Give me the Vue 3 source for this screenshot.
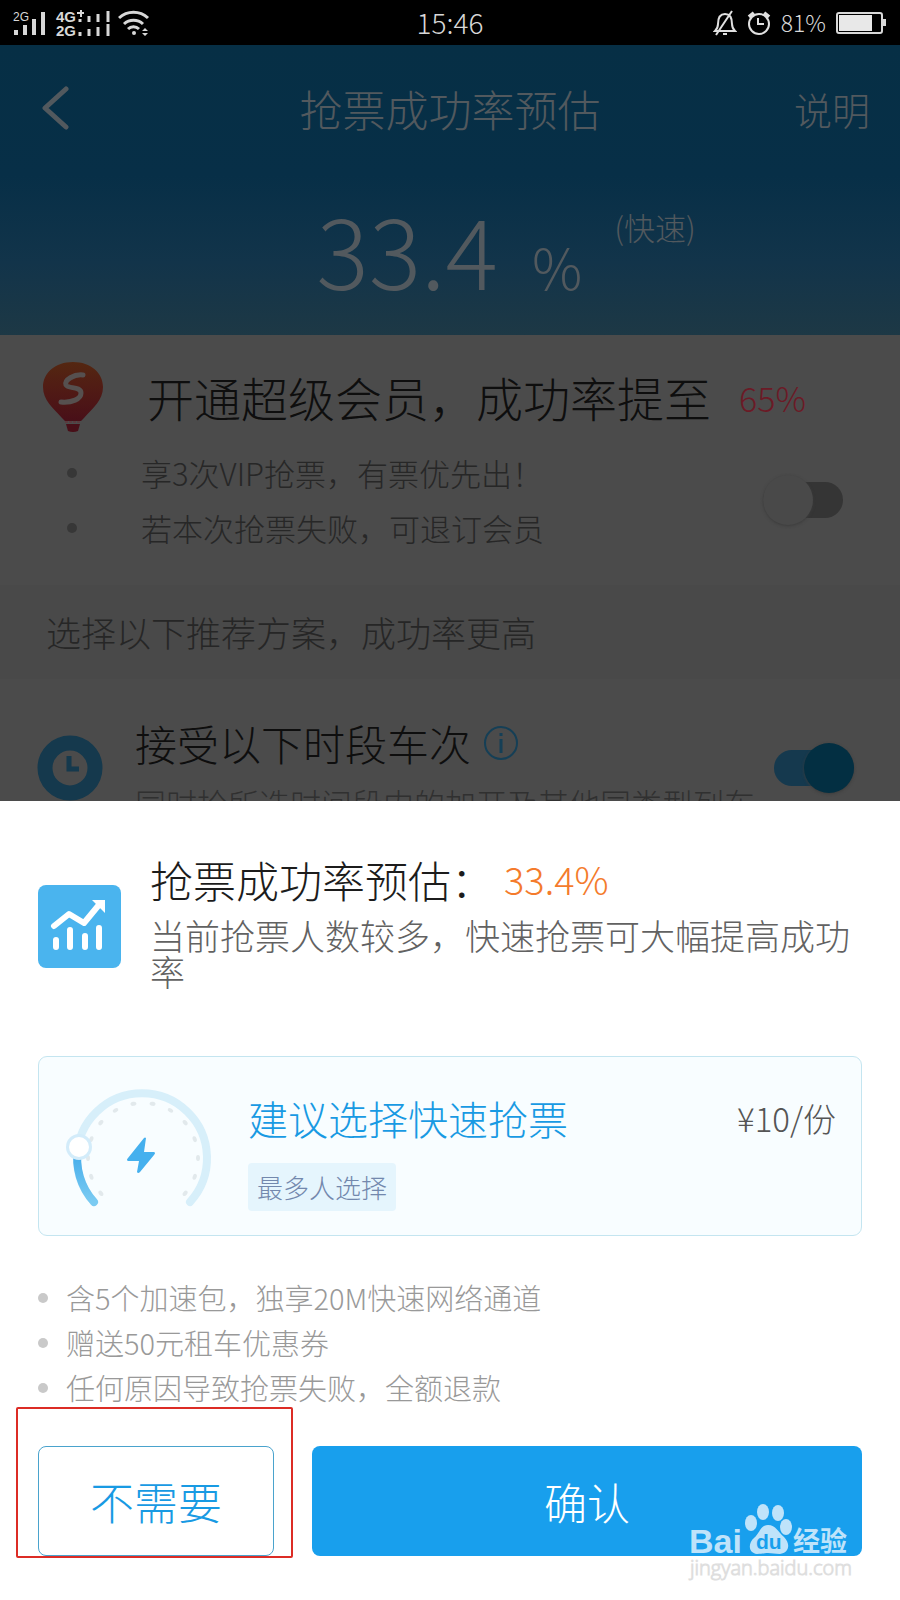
<script setup>
import { ref } from 'vue'

const vip = ref(false)
const period = ref(true)

const vipPerks = ['享3次VIP抢票，有票优先出！', '若本次抢票失败，可退订会员']
const perks = [
  '含5个加速包，独享20M快速网络通道',
  '赠送50元租车优惠券',
  '任何原因导致抢票失败，全额退款',
]

const ticks = Array.from({ length: 14 }, (_, i) => {
  const angle = 140 + (i * 260) / 13
  const a = (angle * Math.PI) / 180
  return { x: 77 + 55 * Math.cos(a), y: 76 + 55 * Math.sin(a), angle }
})
</script>

<template>
  <div class="screen">
    <div class="status">
      <div class="status-side">
        <svg width="118" height="44" viewBox="0 0 118 44" fill="#d8d8d8">
          <text x="13" y="20" font-size="12">2G</text>
          <path d="M16 29v5M25 24v10M34 18v16M43 11v23" stroke="#d8d8d8" stroke-width="4" />
          <text x="56" y="21" font-size="15" font-weight="700">4G</text>
          <path d="M77 12h7M81 9v7" stroke="#d8d8d8" stroke-width="2" />
          <text x="56" y="35" font-size="15" font-weight="700">2G</text>
          <path d="M80 18v3M89 15v6M98 13v8M108 10v11M80 31v4M89 28v7M98 26v9M108 23v12" stroke="#d8d8d8" stroke-width="3" />
        </svg>
        <svg width="32" height="26" viewBox="0 0 32 26" fill="none" stroke="#d8d8d8" stroke-width="3">
          <path d="M1 8a21 21 0 0 1 29 0M6 14a14 14 0 0 1 19 0M10 19a8 8 0 0 1 11 0" />
          <circle cx="16" cy="23" r="2" fill="#d8d8d8" stroke="none" />
          <path d="M27 18l3 3h-6zM27 26l3-3h-6z" fill="#d8d8d8" stroke="none" />
        </svg>
      </div>
      <time>15:46</time>
      <div class="status-side end">
        <svg width="24" height="26" viewBox="0 0 24 26" fill="none" stroke="#e0e0e0" stroke-width="2">
          <path d="M2 21c2-2 3-3 3-7 0-6 2-10 7-10s7 4 7 10c0 4 1 5 3 7zM19 1L3 25M10 24h4" />
        </svg>
        <svg width="24" height="24" viewBox="0 0 24 24" fill="none" stroke="#e0e0e0" stroke-width="2">
          <circle cx="12" cy="13" r="10" />
          <path d="M11 7v6h6" />
          <path d="M2 6l5-4M22 6l-5-4" stroke-width="4" />
        </svg>
        <span>81%</span>
        <svg width="51" height="22" viewBox="0 0 51 22">
          <rect x="1" y="1" width="45" height="20" rx="2" fill="none" stroke="#d8d8d8" stroke-width="2" />
          <rect x="3" y="3" width="33" height="16" fill="#e8e8e8" />
          <rect x="47" y="7" width="3" height="7" fill="#d8d8d8" />
        </svg>
      </div>
    </div>

    <header>
      <nav>
        <button class="back" type="button" aria-label="返回">
          <svg width="28" height="44" viewBox="0 0 28 44" fill="none" stroke="#52595e" stroke-width="5" stroke-linecap="round" stroke-linejoin="round">
            <path d="M24 3L3 22l21 19" />
          </svg>
        </button>
        <h1>抢票成功率预估</h1>
        <a class="help" href="#">说明</a>
      </nav>
      <div class="rate">
        <span class="rate-number">33.4</span>
        <span class="rate-unit">%</span>
        <span class="rate-mode">(快速)</span>
      </div>
    </header>

    <main>
      <section class="vip">
        <div class="vip-title">
          <svg width="62" height="72" viewBox="0 0 62 72">
            <defs>
              <linearGradient id="balloon" x1="0" y1="0" x2="0" y2="1">
                <stop offset="0" stop-color="#542711" />
                <stop offset="0.5" stop-color="#501a15" />
                <stop offset="1" stop-color="#480f18" />
              </linearGradient>
            </defs>
            <path d="M31 1C13 1 1 12 1 26c0 13 10 21 19 31l3 3h16l3-3c9-10 19-18 19-31C61 12 49 1 31 1z" fill="url(#balloon)" />
            <path d="M24 63h14l-2 7q-5 2-10 0z" fill="#480f18" />
            <path d="M23 61h16" stroke="#5a3a3e" stroke-width="2" stroke-dasharray="3 1" />
            <path d="M41 14c-9-1-19 5-17 10 2 4 15 1 15 8 0 6-9 10-20 9" fill="none" stroke="#56504f" stroke-width="5" stroke-linecap="round" />
          </svg>
          <h2>开通超级会员，成功率提至</h2>
          <strong>65%</strong>
        </div>
        <div class="vip-body">
          <ul>
            <li v-for="p in vipPerks" :key="p">{{ p }}</li>
          </ul>
          <input v-model="vip" class="switch" type="checkbox" role="switch" aria-label="开通超级会员">
        </div>
      </section>

      <p class="hint">选择以下推荐方案，成功率更高</p>

      <section class="period">
        <svg class="clock" width="66" height="66" viewBox="0 0 66 66">
          <circle cx="33" cy="33" r="25" fill="none" stroke="#15394d" stroke-width="15" />
          <path d="M32 21v13h10" fill="none" stroke="#15394d" stroke-width="5" />
        </svg>
        <div class="period-copy">
          <h2>
            接受以下时段车次
            <svg width="36" height="36" viewBox="0 0 36 36" fill="none" stroke="#153f56" stroke-width="2">
              <circle cx="18" cy="18" r="16" />
              <path d="M18 14v14M18 8v3" stroke-width="3" />
            </svg>
          </h2>
          <p>同时抢所选时间段内的加开及其他同类型列车</p>
        </div>
        <input v-model="period" class="switch" type="checkbox" role="switch" aria-label="接受以下时段车次">
      </section>
    </main>

    <div class="sheet" role="dialog" aria-labelledby="sheet-title">
      <div class="summary">
        <svg width="83" height="83" viewBox="0 0 83 83">
          <rect width="83" height="83" rx="8" fill="#4ab4ee" />
          <g fill="none" stroke="#fff" stroke-linecap="round" stroke-width="6">
            <path d="M16 41l15-12 15 9 14-17" stroke-linejoin="round" />
            <path d="M18 55v7M32 45v17M47 51v11M61 43v19" />
          </g>
          <path d="M54 15h13v13z" fill="#fff" />
        </svg>
        <div>
          <h2 id="sheet-title">抢票成功率预估：<strong>33.4%</strong></h2>
          <p>当前抢票人数较多，快速抢票可大幅提高成功率</p>
        </div>
      </div>

      <section class="plan">
        <svg class="gauge" width="154" height="130" viewBox="0 0 154 130">
          <defs>
            <linearGradient id="progress" x1="0" y1="0" x2="0" y2="1">
              <stop offset="0" stop-color="#3ea9ea" />
              <stop offset="1" stop-color="#7bcbf2" />
            </linearGradient>
          </defs>
          <path d="M28 120A65 65 0 1 1 124 120" fill="none" stroke="#d7effa" stroke-width="8" stroke-linecap="round" />
          <path d="M28 120A65 65 0 0 1 12 66" fill="none" stroke="url(#progress)" stroke-width="8" stroke-linecap="round" />
          <ellipse
            v-for="t in ticks" :key="t.angle" :cx="t.x" :cy="t.y" rx="2" ry="3" fill="#e2e9ec"
            :transform="`rotate(${t.angle} ${t.x} ${t.y})`"
          />
          <circle cx="13" cy="65" r="13" fill="#d3ecfa" />
          <circle cx="13" cy="65" r="10" fill="#fff" />
          <path d="M78 56q1-1 2 0l-2 14h10q2 1 0 3L74 90q-2 2-3 0l2-11H62q-2-1 0-3z" fill="#45b0ee" />
        </svg>
        <div class="plan-copy">
          <div class="plan-title">
            <h3>建议选择快速抢票</h3>
            <span class="price">¥10/份</span>
          </div>
          <span class="tag">最多人选择</span>
        </div>
      </section>

      <ul class="perks">
        <li v-for="p in perks" :key="p">{{ p }}</li>
      </ul>

      <div class="actions">
        <div class="decline-wrap">
          <button class="decline" type="button">不需要</button>
        </div>
        <button class="confirm" type="button">确认</button>
        <svg class="watermark" width="170" height="84" viewBox="0 0 170 84" aria-hidden="true">
          <g fill="#bfe3fa">
            <text x="5" y="53" font-size="34" font-weight="700">Bai</text>
            <ellipse cx="67" cy="23" rx="6" ry="8" />
            <ellipse cx="79" cy="12" rx="6" ry="8" />
            <ellipse cx="94" cy="13" rx="6" ry="8" />
            <ellipse cx="102" cy="27" rx="6" ry="8" />
            <path d="M84 25c-8 0-8 8-14 13-6 5-6 15 3 16 5 0 7-1 11-1s7 1 12 1c9-1 11-10 4-17-6-5-8-12-16-12z" />
            <text class="cjk" x="109" y="51" font-size="27" font-weight="700">经验</text>
          </g>
          <text x="72" y="49" font-size="21" font-weight="700" fill="#189fed">du</text>
          <text class="site" x="6" y="75" font-size="20" fill="#fff" stroke="#dedede" stroke-width="1">jingyan.baidu.com</text>
        </svg>
      </div>
    </div>
  </div>
</template>

<style>
body {
  margin: 0;
  background: #fff;
}
</style>

<style scoped>
.screen {
  font-family: "Noto Sans CJK SC", "Noto Sans", sans-serif;
  font-weight: 300;
  background: #fff;
  overflow: hidden;
}
h1, h2, h3, p, ul {
  margin: 0;
  padding: 0;
  font-weight: 300;
}
ul { list-style: none; }
svg { flex: none; display: block; }
button { font: inherit; cursor: pointer; padding: 0; }
strong { font-weight: 300; }

.status {
  display: grid;
  grid-template-columns: 1fr auto 1fr;
  align-items: center;
  height: 45px;
  background: #000;
  color: #d8d8d8;
}
.status text { font-family: "Liberation Sans", sans-serif; }
.status-side { display: flex; align-items: center; }
.status time { font-size: 28px; line-height: 45px; }
.end { justify-content: flex-end; gap: 10px; padding-right: 13px; font-size: 23px; line-height: 45px; }

header {
  height: 290px;
  background: linear-gradient(#062f45 0%, #072f47 45%, #12344a 75%, #1d3845 100%);
  color: #52595e;
}
nav {
  display: grid;
  grid-template-columns: 1fr auto 1fr;
  align-items: center;
  height: 126px;
  padding: 0 30px;
}
.back { justify-self: start; margin-left: 12px; background: none; border: 0; color: inherit; }
h1 { font-size: 43px; line-height: 60px; }
.help { justify-self: end; color: inherit; text-decoration: none; font-size: 38px; }
.rate {
  display: flex;
  justify-content: center;
  align-items: baseline;
  padding-left: 112px;
  line-height: 152px;
}
.rate-number { font-size: 98px; }
.rate-unit { font-size: 56px; margin-left: 34px; }
.rate-mode { font-size: 31px; line-height: 40px; align-self: flex-start; margin: 36px 0 0 32px; }

main { background: #4b4b4b; color: #272727; }
.vip { padding: 24px 57px 30px 42px; }
.vip-title { display: flex; align-items: center; height: 76px; color: #0e0e0e; }
.vip-title h2 { margin-left: 43px; font-size: 47px; line-height: 72px; white-space: nowrap; }
.vip-title strong { margin-left: 28px; font-size: 34px; color: #6b1a26; }
.vip-body { display: flex; align-items: center; justify-content: space-between; margin-top: 10px; }
.vip-body li {
  display: flex;
  align-items: center;
  gap: 64px;
  padding-left: 25px;
  font-size: 31px;
  line-height: 55px;
}
.vip-body li::before { content: ""; width: 10px; height: 10px; border-radius: 50%; background: #373737; }

.switch {
  appearance: none;
  flex: none;
  position: relative;
  width: 80px;
  height: 50px;
  margin: 0;
}
.switch::before {
  content: "";
  position: absolute;
  inset: 7px 0;
  border-radius: 18px;
  background: #353535;
}
.switch::after {
  content: "";
  position: absolute;
  top: 0;
  left: 0;
  width: 50px;
  height: 50px;
  border-radius: 50%;
  background: #494949;
  box-shadow: 0 1px 3px #3c3c3c;
}
.switch:checked::before { background: #15394e; }
.switch:checked::after { left: 30px; background: #032f42; }

.hint { padding: 0 46px; font-size: 35px; line-height: 94px; background: #494949; color: #262626; }

.period { display: flex; align-items: flex-start; padding: 34px 46px 0 37px; }
.clock { margin-top: 22px; }
.period-copy { flex: 1; margin-left: 32px; }
.period h2 { display: flex; align-items: center; gap: 12px; font-size: 42px; line-height: 60px; color: #0e0e0e; }
.period p { font-size: 31px; line-height: 60px; white-space: nowrap; color: #303030; }
.period .switch { margin-top: 30px; }

.sheet {
  position: relative;
  margin-top: -32px;
  padding: 50px 38px 43px;
  background: #fff;
}
.summary { display: flex; gap: 29px; }
.summary > svg { margin-top: 34px; }
.summary h2 { display: flex; align-items: center; gap: 10px; font-size: 43px; line-height: 56px; color: #1c1c1c; }
.summary strong { font-size: 38px; color: #f47b2c; }
.summary p { margin-top: 10px; font-size: 35px; line-height: 36px; color: #626262; }

.plan {
  display: flex;
  gap: 28px;
  margin-top: 67px;
  padding: 25px 25px 23px 27px;
  border: 1px solid #c4e5f0;
  border-radius: 9px;
  background: #f8fdff;
}
.plan-copy { flex: 1; padding-top: 11px; }
.plan-title { display: flex; align-items: center; justify-content: space-between; }
h3 { font-size: 40px; line-height: 50px; color: #189ae3; }
.price { font-size: 33px; line-height: 50px; color: #555; }
.tag {
  display: inline-block;
  margin-top: 20px;
  padding: 0 9px;
  border-radius: 4px;
  background: #e5f5fd;
  color: #7388ad;
  font-size: 26px;
  line-height: 48px;
}

.perks { margin-top: 39px; }
.perks li { display: flex; align-items: center; gap: 18px; font-size: 29px; line-height: 45px; color: #999; }
.perks li::before { content: ""; width: 10px; height: 10px; border-radius: 50%; background: #c9c9c9; }

.actions { position: relative; display: flex; gap: 38px; margin-top: 36px; }
.decline-wrap { position: relative; flex: 3 1 0; }
.decline-wrap::after {
  content: "";
  position: absolute;
  inset: -39px -19px -2px -22px;
  border: 2px solid #dc2c25;
  border-radius: 2px;
  pointer-events: none;
}
.decline, .confirm { height: 110px; border-radius: 8px; }
.decline { width: 100%; border: 1px solid #4aa3cd; background: #fff; color: #189ae3; font-size: 44px; }
.confirm { flex: 7 1 0; border: 0; background: #189fed; color: #fff; font-size: 43px; }
.watermark { position: absolute; right: 8px; bottom: -28px; pointer-events: none; }
.watermark text { font-family: "Liberation Sans", sans-serif; }
.watermark .cjk { font-family: "Noto Sans CJK SC", sans-serif; }
.watermark .site { font-family: "Open Sans", "Noto Sans", sans-serif; }
</style>
